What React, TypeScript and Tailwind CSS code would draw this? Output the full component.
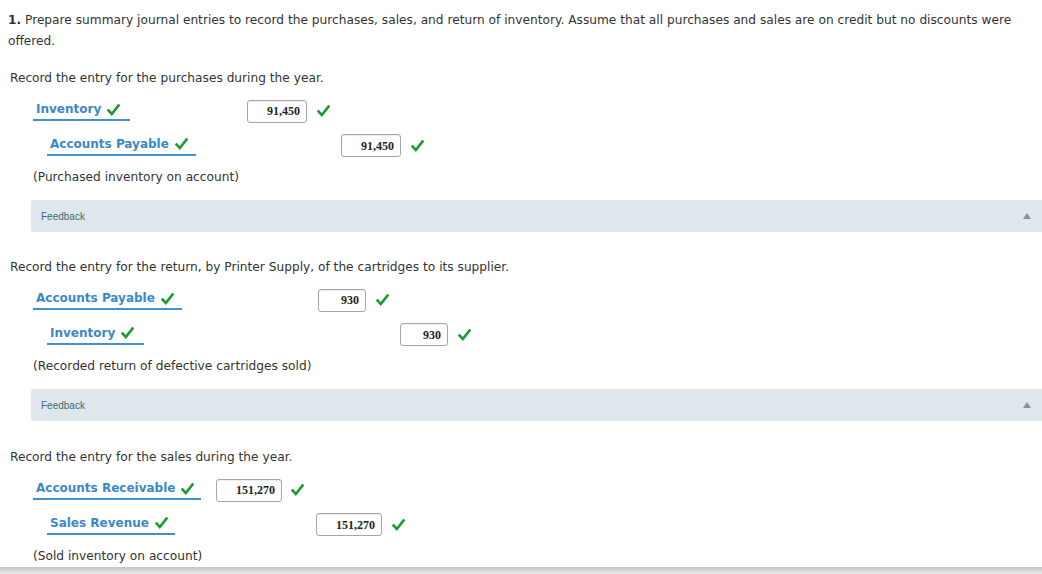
import React from 'react';

function Check() {
  return (
    <svg width="13" height="12" viewBox="0 0 13 12" className="inline-block shrink-0">
      <path d="M1.5 6.5 L4.8 10 L11.5 1.5" fill="none" stroke="#1a9c33" strokeWidth="2.6" strokeLinecap="square" />
    </svg>
  );
}

function Amount({ value, className }: { value: string; className: string }) {
  return (
    <div
      className={`h-[23px] border border-[#a6a6a6] rounded-[3px] bg-white flex items-center justify-end pr-[6px] text-[12px] font-bold text-[#222] shadow-[inset_0_1px_1px_rgba(0,0,0,0.08)] ${className}`}
      style={{ fontFamily: '"Liberation Serif", serif' }}
    >
      {value}
    </div>
  );
}

function Account({ name, className }: { name: string; className: string }) {
  return (
    <div className={`shrink-0 flex items-center gap-[6px] whitespace-nowrap border-b-2 border-[#4390cf] pl-[3px] pb-[1px] leading-[17px] text-[12px] font-bold text-[#3b88c8] ${className}`}>
      <span>{name}</span>
      <Check />
    </div>
  );
}

function Feedback() {
  return (
    <div className="ml-[31px] h-[32px] bg-[#dfe6ec] rounded-l-[3px] flex items-center justify-between pl-[10px] pr-[11px]">
      <span className="text-[10px] text-[#3f6a72]" style={{ fontFamily: '"Liberation Sans", Arial, sans-serif' }}>
        Feedback
      </span>
      <svg width="8" height="6" viewBox="0 0 8 6">
        <path d="M4 0 L8 6 L0 6 Z" fill="#8a9096" />
      </svg>
    </div>
  );
}

export default function App() {
  return (
    <div
      className="relative w-full h-[574px] overflow-hidden bg-white text-[#333] text-[12.2px]"
      style={{ fontFamily: '"DejaVu Sans", Verdana, sans-serif' }}
    >
      <p className="pl-[8px] pr-[20px] pt-[10px] leading-[21px]">
        <span className="font-bold">1.</span> Prepare summary journal entries to record the purchases, sales, and return of inventory. Assume that all purchases and sales are on credit but no discounts were offered.
      </p>

      {/* purchases */}
      <div className="mt-[16px] pl-[10px] leading-[21px]">Record the entry for the purchases during the year.</div>
      <div className="mt-[5px] h-[34px] flex items-center">
        <Account name="Inventory" className="ml-[33px] w-[97px]" />
        <Amount value="91,450" className="ml-[117px] w-[60px]" />
        <div className="ml-[10px]"><Check /></div>
      </div>
      <div className="h-[35px] flex items-center">
        <Account name="Accounts Payable" className="ml-[47px] w-[149px]" />
        <Amount value="91,450" className="ml-[145px] w-[60px]" />
        <div className="ml-[10px]"><Check /></div>
      </div>
      <div className="mt-[4px] pl-[33px] leading-[21px]">(Purchased inventory on account)</div>
      <div className="mt-[12px]"><Feedback /></div>

      {/* return */}
      <div className="mt-[25px] pl-[10px] leading-[21px]">Record the entry for the return, by Printer Supply, of the cartridges to its supplier.</div>
      <div className="mt-[5px] h-[34px] flex items-center">
        <Account name="Accounts Payable" className="ml-[33px] w-[149px]" />
        <Amount value="930" className="ml-[136px] w-[48px]" />
        <div className="ml-[10px]"><Check /></div>
      </div>
      <div className="h-[35px] flex items-center">
        <Account name="Inventory" className="ml-[47px] w-[97px]" />
        <Amount value="930" className="ml-[256px] w-[48px]" />
        <div className="ml-[10px]"><Check /></div>
      </div>
      <div className="mt-[4px] pl-[33px] leading-[21px]">(Recorded return of defective cartridges sold)</div>
      <div className="mt-[12px]"><Feedback /></div>

      {/* sales */}
      <div className="mt-[26px] pl-[10px] leading-[21px]">Record the entry for the sales during the year.</div>
      <div className="mt-[5px] h-[34px] flex items-center">
        <Account name="Accounts Receivable" className="ml-[33px] w-[168px]" />
        <Amount value="151,270" className="ml-[15px] w-[66px]" />
        <div className="ml-[9px]"><Check /></div>
      </div>
      <div className="h-[35px] flex items-center">
        <Account name="Sales Revenue" className="ml-[47px] w-[128px]" />
        <Amount value="151,270" className="ml-[141px] w-[66px]" />
        <div className="ml-[10px]"><Check /></div>
      </div>
      <div className="mt-[4px] pl-[33px] leading-[21px]">(Sold inventory on account)</div>

      <div className="absolute left-0 right-0 bottom-0 h-[7px] bg-gradient-to-b from-[#c4c4c4] to-[#ececec]" />
    </div>
  );
}
